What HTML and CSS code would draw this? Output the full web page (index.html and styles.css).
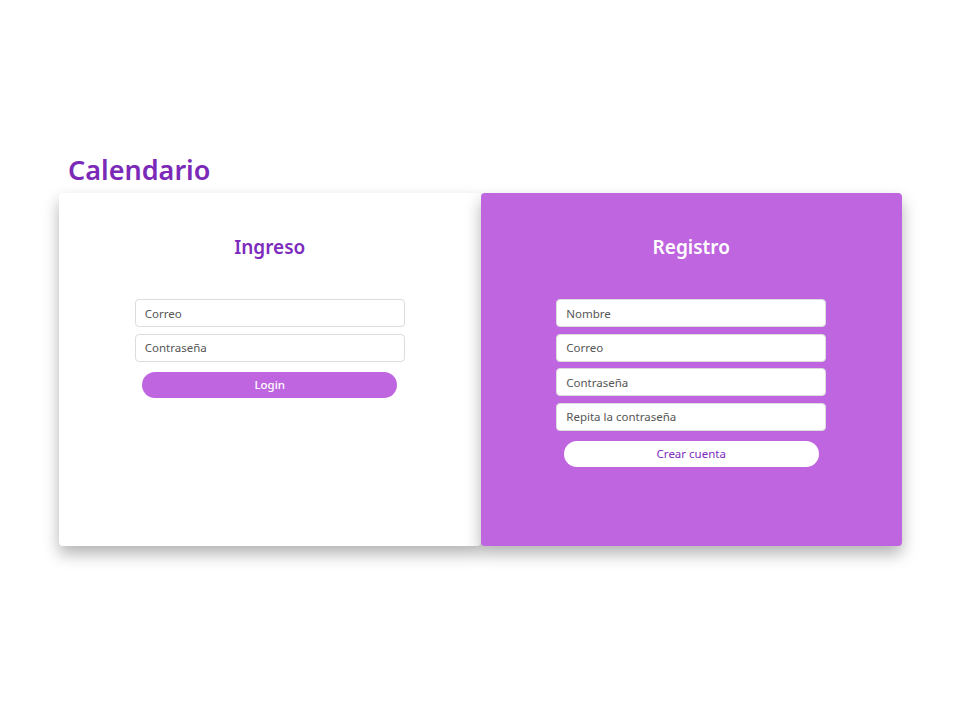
FILE: index.html
```html
<!DOCTYPE html>
<html lang="es">
<head>
<meta charset="utf-8">
<title>Calendario</title>
<link rel="stylesheet" href="styles.css">
</head>
<body>
<main class="wrap">
  <h1 class="title">Calendario</h1>
  <div class="card">
    <section class="panel panel-login">
      <h2 class="panel-title">Ingreso</h2>
      <form class="form">
        <input class="field" type="text" placeholder="Correo">
        <input class="field" type="password" placeholder="Contraseña">
        <button class="btn btn-login" type="button">Login</button>
      </form>
    </section>
    <section class="panel panel-register">
      <h2 class="panel-title">Registro</h2>
      <form class="form">
        <input class="field" type="text" placeholder="Nombre">
        <input class="field" type="text" placeholder="Correo">
        <input class="field" type="password" placeholder="Contraseña">
        <input class="field" type="password" placeholder="Repita la contraseña">
        <button class="btn btn-register" type="button">Crear cuenta</button>
      </form>
    </section>
  </div>
</main>
</body>
</html>
```
FILE: styles.css
```css
* { box-sizing: border-box; }
html, body { margin: 0; padding: 0; background: #fff; }
body { font-family: "Noto Sans", "Open Sans", sans-serif; min-height: 713px; }
.wrap {
  width: 843px;
  padding: 152px 0 120px;
  margin-left: 59px;
}
.title {
  margin: 0 0 5px;
  padding-left: 9px;
  font-size: 27px;
  line-height: 36px;
  font-weight: 600;
  color: #7b2ab8;
}
.card {
  display: flex;
  height: 353px;
}
.panel {
  flex: 1;
  display: flex;
  flex-direction: column;
  align-items: center;
  padding-top: 42px;
  border-radius: 4px;
  box-shadow: 0 8px 16px rgba(0,0,0,0.3);
}
.panel-login { background: #fff; }
.panel-register { background: #c065e0; }
.panel-title {
  margin: 0 0 39px;
  font-size: 19px;
  line-height: 25px;
  font-weight: 600;
  color: #7d2bbd;
}
.panel-register .panel-title { color: #fff; }
.form {
  display: flex;
  flex-direction: column;
  align-items: center;
  gap: 6.6px;
  width: 270px;
}
.field {
  width: 270px;
  height: 28px;
  padding: 0 9px;
  border: 1px solid #dcdcdc;
  border-radius: 4px;
  background: #fff;
  font-family: inherit;
  font-size: 11.5px;
  color: #555;
  outline: none;
}
.field::placeholder { color: #555; }
.btn {
  width: 255px;
  height: 26px;
  margin-top: 3.4px;
  border: none;
  border-radius: 13px;
  font-family: inherit;
  font-size: 11.5px;
  cursor: pointer;
}
.btn-login { background: #c065e0; color: #fff; font-weight: 500; }
.btn-register { background: #fff; color: #7d2bbd; }
```
